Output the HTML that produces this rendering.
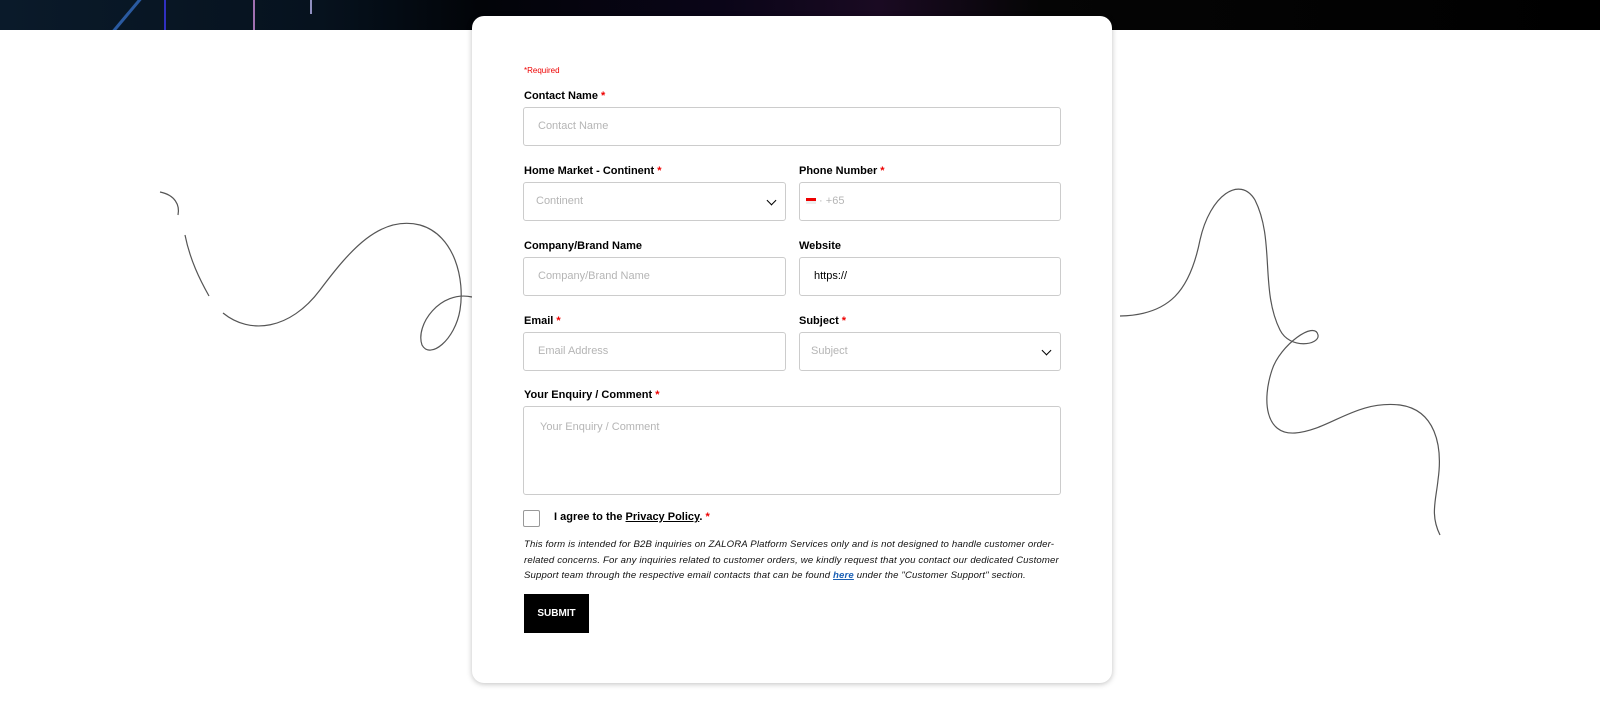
<!DOCTYPE html>
<html><head><style>
*{box-sizing:border-box;margin:0;padding:0}
body{width:1600px;height:709px;background:#fff;font-family:"Liberation Sans",Arial,sans-serif;position:relative;overflow:hidden}
.top{position:absolute;left:0;top:0;width:1600px;height:30px;background:linear-gradient(90deg,#0a1a2a 0%,#06121e 20%,#020408 30%,#0a0518 45%,#1a0a22 55%,#050505 65%,#000 100%)}
.card{position:absolute;left:472px;top:16px;width:640px;height:667px;background:#fff;border-radius:12px;box-shadow:0 1px 6px rgba(0,0,0,.25)}
.a{position:absolute}
.lbl{position:absolute;font-size:11px;font-weight:bold;color:#000}
.lbl b{color:#e00}
.in{position:absolute;border:1px solid #ccc;border-radius:3px;height:39px;font-size:11px;color:#b5b5b5;padding-left:14px;line-height:37px}
.chev{position:absolute;right:10px;top:14px;width:7px;height:7px;border-right:1.6px solid #000;border-bottom:1.6px solid #000;transform:rotate(45deg)}
svg{position:absolute;left:0;top:0}
.disc div{white-space:nowrap}
</style></head><body>
<div class="top"><div class="a" style="left:125px;top:0;width:4px;height:30px;background:#2a5aa0;transform:skewX(-40deg)"></div><div class="a" style="left:164px;width:2px;height:30px;background:#3030c0"></div><div class="a" style="left:253px;width:2px;height:30px;background:#a070b0"></div><div class="a" style="left:310px;width:2px;height:14px;background:#9090c0"></div></div>
<svg width="1600" height="709" fill="none" stroke="#555" stroke-width="1.2">
<path d="M160 192 C175 195 180 205 178 215"/>
<path d="M185 235 C190 260 200 280 209 296"/>
<path d="M223 313 C250 335 290 330 320 290 C350 250 380 215 420 225 C455 235 465 280 460 310 C455 340 430 360 422 345 C415 325 440 290 472 297"/>
<path d="M1120 316 C1170 315 1190 290 1200 240 C1210 195 1240 175 1255 200 C1275 240 1260 290 1280 330 C1290 350 1320 345 1318 335 C1315 320 1280 345 1272 370 C1262 400 1265 435 1295 433 C1330 430 1355 400 1400 405 C1435 410 1443 445 1438 480 C1436 500 1430 515 1440 535"/>
</svg>
<div class="card"></div>
<div class="a" style="left:524px;top:66px;font-size:8px;color:#e00">*Required</div>
<div class="lbl" style="left:524px;top:90px">Contact Name <b>*</b></div>
<div class="in" style="left:523px;top:107px;width:538px">Contact Name</div>
<div class="lbl" style="left:524px;top:165px">Home Market - Continent <b>*</b></div>
<div class="in" style="left:523px;top:182px;width:263px;padding-left:12px">Continent<div class="chev"></div></div>
<div class="lbl" style="left:799px;top:165px">Phone Number <b>*</b></div>
<div class="in" style="left:799px;top:182px;width:262px;padding-left:6px"><span style="display:inline-block;width:10px;height:6px;background:linear-gradient(#e00 50%,#eee 50%);vertical-align:middle"></span> · +65</div>
<div class="lbl" style="left:524px;top:240px">Company/Brand Name</div>
<div class="in" style="left:523px;top:257px;width:263px">Company/Brand Name</div>
<div class="lbl" style="left:799px;top:240px">Website</div>
<div class="in" style="left:799px;top:257px;width:262px;color:#000">https://</div>
<div class="lbl" style="left:524px;top:315px">Email <b>*</b></div>
<div class="in" style="left:523px;top:332px;width:263px">Email Address</div>
<div class="lbl" style="left:799px;top:315px">Subject <b>*</b></div>
<div class="in" style="left:799px;top:332px;width:262px;padding-left:11px">Subject<div class="chev"></div></div>
<div class="lbl" style="left:524px;top:389px">Your Enquiry / Comment <b>*</b></div>
<div class="in" style="left:523px;top:406px;width:538px;height:89px;line-height:normal;padding:14px 0 0 16px">Your Enquiry / Comment</div>
<div class="a" style="left:523px;top:510px;width:17px;height:17px;border:1px solid #999;border-radius:2px"></div>
<div class="lbl" style="left:554px;top:511px">I agree to the <u>Privacy Policy</u>. <b>*</b></div>
<div class="a disc" style="left:524px;top:537px;font-size:9.6px;letter-spacing:0.15px;font-style:italic;line-height:15.5px;color:#111">
<div>This form is intended for B2B inquiries on ZALORA Platform Services only and is not designed to handle customer order-</div>
<div>related concerns. For any inquiries related to customer orders, we kindly request that you contact our dedicated Customer</div>
<div>Support team through the respective email contacts that can be found <b style="color:#1a5fb4;text-decoration:underline">here</b> under the "Customer Support" section.</div>
</div>
<div class="a" style="left:524px;top:594px;width:65px;height:39px;background:#000;color:#fff;font-size:10px;font-weight:bold;text-align:center;line-height:39px">SUBMIT</div>
</body></html>
